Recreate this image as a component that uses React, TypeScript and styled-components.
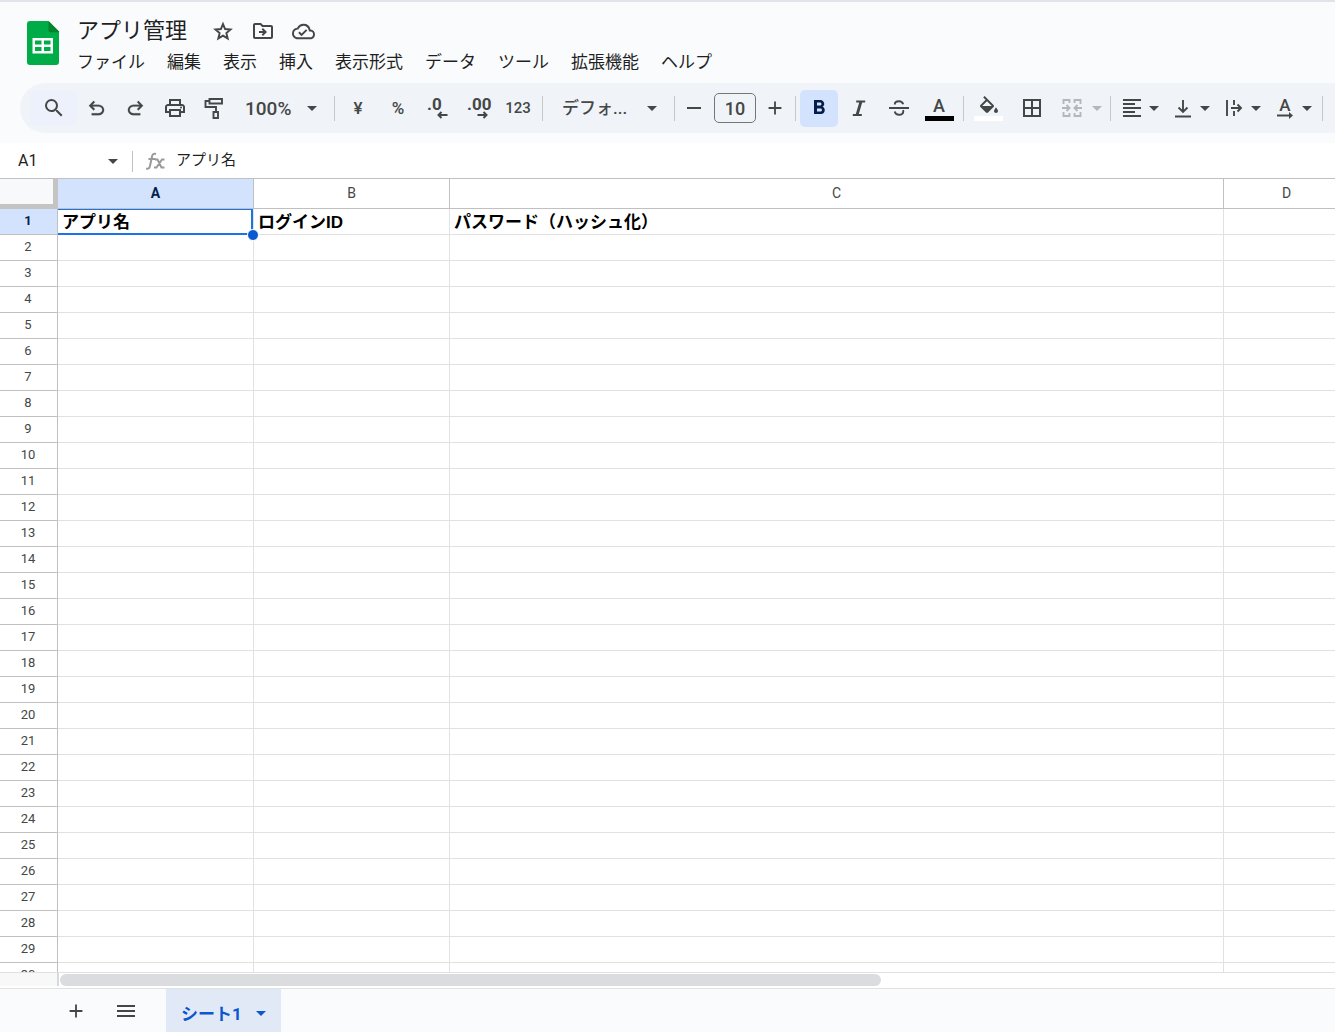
import React from "react";
import styled, { createGlobalStyle } from "styled-components";
import {
  MdAdd,
  MdArrowDropDown,
  MdBorderAll,
  MdFormatAlignLeft,
  MdFormatBold,
  MdMenu,
  MdOutlineCloudDone,
  MdOutlineDriveFileMove,
  MdOutlinePrint,
  MdRemove,
  MdSearch,
} from "react-icons/md";

const ui = `Roboto, "Noto Sans CJK JP", sans-serif`;
const ink = "#444746";
const line = "#c0c0c0";

const GlobalStyle = createGlobalStyle`
  *, *::before, *::after { box-sizing: border-box; }
  body { margin: 0; font-family: ${ui}; color: #1f1f1f; overflow: hidden; }
  button, input, select { font: inherit; color: inherit; border: 0; margin: 0; padding: 0; background: none; }
  button, select { cursor: pointer; }
  svg { display: block; flex: none; }
`;

const Page = styled.div`
  display: flex;
  flex-direction: column;
  height: 100vh;
  background: #fff;
`;

const Top = styled.header`
  flex: none;
  background: #f9fbfd;
  border-top: 2px solid #e1e3ea;
  padding-bottom: 10px;
`;

const Branding = styled.div`
  display: flex;
  height: 81px;
  padding-left: 26px;
  gap: 17px;
`;

const HomeLink = styled.a`
  padding-top: 19px;
`;

const Heading = styled.div`
  display: flex;
  flex-direction: column;
  padding-top: 13px;
`;

const TitleRow = styled.div`
  display: flex;
  align-items: center;
  height: 32px;
`;

const Title = styled.h1`
  margin: 0 16px 0 0;
  font-size: 22px;
  line-height: 32px;
  font-weight: 400;
`;

const TitleButton = styled.button`
  display: flex;
  justify-content: center;
  width: 40px;
  color: ${ink};
`;

const TitleActions = styled.div`
  display: flex;
  align-items: center;
`;

const MenuBar = styled.nav`
  display: flex;
  gap: 22px;
`;

const MenuButton = styled.button`
  font-size: 17px;
  line-height: 30px;
  white-space: nowrap;
`;

const Toolbar = styled.div`
  display: flex;
  align-items: center;
  height: 50px;
  margin-left: 20px;
  padding-left: 10px;
  border-radius: 25px 0 0 25px;
  background: #f0f4f9;
  color: ${ink};
  overflow: hidden;
  font-weight: 500;
`;

const Tool = styled.button<{ $width?: number; $active?: boolean; $tint?: boolean; $size?: number }>`
  display: flex;
  flex: none;
  align-items: center;
  justify-content: center;
  width: ${(p) => p.$width ?? 38}px;
  height: ${(p) => (p.$tint ? 35 : 37)}px;
  margin: 0 ${(p) => (p.$width ? 0 : 1)}px;
  border-radius: 5px;
  font-size: ${(p) => p.$size ?? 17}px;
  color: ${(p) => (p.$active ? "#041e49" : "inherit")};
  background: ${(p) => (p.$active ? "#d3e3fd" : p.$tint ? "#edf1fb" : "transparent")};
`;

const Split = styled.button<{ $wide?: boolean }>`
  display: flex;
  flex: none;
  align-items: center;
  width: ${(p) => (p.$wide ? 53 : 51)}px;
  height: 37px;
  gap: ${(p) => (p.$wide ? 3 : 0)}px;
  padding-left: ${(p) => (p.$wide ? 7 : 6)}px;

  &:disabled {
    color: #b4b7b9;
  }
`;

const Caret = styled(MdArrowDropDown)`
  width: 24px;
  height: 24px;
  margin: 0 -2px;
`;

const Divider = styled.span`
  flex: none;
  width: 1px;
  height: 25px;
  margin: 0 3px 0 4px;
  background: #c7c7c7;
`;

const Picker = styled.label<{ $width: number; $pad: number; $size: number }>`
  display: flex;
  flex: none;
  align-items: center;
  width: ${(p) => p.$width}px;
  padding: 0 8px 0 ${(p) => p.$pad}px;
  font-size: ${(p) => p.$size}px;

  select {
    flex: 1;
    min-width: 0;
    appearance: none;
    outline: 0;
  }
`;

const SizeInput = styled.input`
  flex: none;
  width: 42px;
  height: 30px;
  margin: 0 3px 0 4px;
  border: 1px solid #747775;
  border-radius: 5px;
  text-align: center;
  font-size: 18px;
`;

const Decimal = styled.span`
  display: grid;
  justify-items: start;
  width: 22px;
  font-size: 17px;
  line-height: 14px;
  font-weight: 700;

  svg {
    margin-left: 10px;
  }
`;

const Swatch = styled.span<{ $color: string }>`
  display: flex;
  flex-direction: column;
  align-items: center;
  justify-content: flex-end;
  width: 29px;
  height: 26px;
  font-size: 18px;
  line-height: 20px;
  border-bottom: 5px solid ${(p) => p.$color};
`;

const Rotated = styled.span`
  display: flex;
  flex-direction: column;
  align-items: center;
  width: 24px;
  font-size: 17px;
  line-height: 14px;
`;

const FormulaBar = styled.div`
  display: flex;
  flex: none;
  align-items: center;
  height: 35px;
`;

const NameBox = styled.input`
  width: 83px;
  margin-left: 18px;
  font-size: 16px;
`;

const NameCaret = styled.button`
  display: flex;
`;

const FormulaDivider = styled.span`
  width: 1px;
  height: 21px;
  margin: 2px 13px 0 7px;
  background: ${line};
`;

const FormulaInput = styled.input`
  flex: 1;
  min-width: 0;
  height: 26px;
  margin-left: 10px;
  padding-bottom: 4px;
  font-size: 15px;
`;

const Viewport = styled.main`
  flex: 1;
  min-height: 0;
  overflow: hidden;
  border-top: 1px solid ${line};
`;

const Grid = styled.table`
  table-layout: fixed;
  width: 1350px;
  min-width: 100%;
  border-spacing: 0;
`;

const Corner = styled.td`
  height: 30px;
  padding: 0;
  background: #f8f9fa;
  border: solid #c4c4c4;
  border-width: 0 5px 5px 0;
`;

const ColumnHead = styled.th<{ $selected: boolean }>`
  height: 30px;
  padding: 0 0 1px;
  border: solid ${line};
  border-width: 0 1px 1px 0;
  background: ${(p) => (p.$selected ? "#d3e3fd" : "#fff")};
  color: ${(p) => (p.$selected ? "#041e49" : ink)};
  font-size: 14px;
  font-weight: ${(p) => (p.$selected ? 700 : 400)};
`;

const RowHead = styled.th<{ $selected: boolean }>`
  height: 26px;
  padding: 0 1px 2px 0;
  border: solid ${line};
  border-width: 0 1px 1px 0;
  background: ${(p) => (p.$selected ? "#d3e3fd" : "#fff")};
  color: ${(p) => (p.$selected ? "#041e49" : ink)};
  font-size: 13px;
  line-height: 16px;
  font-weight: ${(p) => (p.$selected ? 700 : 400)};
`;

const Cell = styled.td`
  position: relative;
  height: 26px;
  padding: 3px 4px 0;
  border: solid #e1e1e1;
  border-width: 0 1px 1px 0;
  color: #000;
  font-family: "Liberation Sans", "Noto Sans CJK JP", sans-serif;
  font-size: 17px;
  line-height: 22px;
  font-weight: 700;
  white-space: nowrap;
`;

const Selection = styled.span`
  position: absolute;
  inset: 0 0 -1px 0;
  border: solid #1a73e8;
  border-width: 1px 2px 2px 0;

  &::after {
    content: "";
    position: absolute;
    right: -8px;
    bottom: -8px;
    width: 12px;
    height: 12px;
    border: 1px solid #fff;
    border-radius: 50%;
    background: #0b57d0;
    z-index: 1;
  }
`;

const ScrollArea = styled.div`
  display: flex;
  flex: none;
  height: 16px;
  border-top: 1px solid #e1e1e1;
`;

const ScrollCorner = styled.div`
  width: 59px;
  height: 13px;
  background: #f8f8f8;
  border-right: 2px solid #d9d9d9;
`;

const ScrollTrack = styled.div`
  flex: 1;
  padding: 1px 0 0 1px;
`;

const ScrollThumb = styled.div`
  width: 64.4%;
  height: 12px;
  border-radius: 6px;
  background: #dadce0;
`;

const SheetBar = styled.footer`
  display: flex;
  flex: none;
  height: 44px;
  padding-left: 51px;
  border-top: 1px solid #e1e1e1;
  background: #f9fbfd;
  color: ${ink};
`;

const SheetTool = styled.button`
  display: flex;
  align-items: center;
  justify-content: center;
  width: 50px;
`;

const SheetTab = styled.button`
  display: flex;
  align-items: center;
  width: 115px;
  margin-left: 15px;
  padding: 4px 10px 0 15px;
  justify-content: space-between;
  background: #e1e9f7;
  color: #0b57d0;
  font-size: 17px;
  font-weight: 700;
  white-space: nowrap;
`;

const SheetsLogo = () => (
  <svg width="34" height="45" viewBox="0 0 34 45">
    <path d="M4 0h18.500L33 10.500V41a3 3 0 0 1-3 3H4a3 3 0 0 1-3-3V3a3 3 0 0 1 3-3z" fill="#00ac47" />
    <path d="M22.500 0 33 10.500v.8H24.500a2 2 0 0 1-2-2z" fill="#00832d" />
    <path
      d="M6.500 17h20.500v15.500H6.500zM9 19.500v4h6.500v-4zM18 19.500v4h6.500v-4zM9 26v4h6.500v-4zM18 26v4h6.500v-4z"
      fill="#fff"
      fillRule="evenodd"
    />
  </svg>
);

const StarIcon = () => (
  <svg width="22" height="22" viewBox="0 0 24 24" fill="none" stroke="currentColor" strokeWidth="2.100">
    <path d="M12 4.400l2.300 5.500 5.900.5-4.500 3.900 1.400 5.800L12 17l-5.100 3.100 1.400-5.800-4.500-3.900 5.900-.5z" />
  </svg>
);

const UndoIcon = ({ flip }: { flip?: boolean }) => (
  <svg width="23" height="23" viewBox="0 -960 960 960" fill="currentColor" stroke="currentColor" strokeWidth="8">
    <path
      transform={flip ? "translate(960 0) scale(-1 1)" : undefined}
      d="M280-200v-80h284q63 0 109.500-40T720-420q0-60-46.500-100T564-560H312l104 104-56 56-200-200 200-200 56 56-104 104h252q97 0 166.500 63T800-420q0 94-69.500 157T564-200H280Z"
    />
  </svg>
);

const PaintIcon = () => (
  <svg width="24" height="24" viewBox="0 0 24 24" fill="none" stroke="currentColor" strokeWidth="1.900">
    <path d="M7.500 3h12.500v4.500H7.500zM7.500 5H3.500v6h10.500v5M11.500 16h4.500v6h-4.500z" />
  </svg>
);

const ItalicIcon = () => (
  <svg width="24" height="24" viewBox="0 0 24 24" fill="none" stroke="currentColor">
    <path d="M9.200 5.500h9M5.800 19h9" strokeWidth="2.200" />
    <path d="M14 5.500 10 19" strokeWidth="2.800" />
  </svg>
);

const StrikeIcon = () => (
  <svg width="24" height="24" viewBox="0 0 24 24" fill="none" stroke="currentColor" strokeWidth="1.900">
    <path d="M2 12h20" />
    <path d="M16.200 8.200C15.500 6.200 14 5.200 12 5.200c-2.500 0-4.200 1.300-4.200 3.200" />
    <path d="M7.700 15.500c.6 2.200 2.300 3.300 4.300 3.300 2.600 0 4.300-1.300 4.300-3.500 0-.4-.1-.8-.3-1.200" />
  </svg>
);

const FillIcon = () => (
  <svg width="24" height="20" viewBox="0 0 24 20" fill="currentColor">
    <path d="M16.560 8.940 7.620 0 6.210 1.410l2.380 2.380-5.150 5.150c-.59.59-.59 1.540 0 2.120l5.500 5.500c.29.29.68.44 1.060.44s.77-.15 1.060-.44l5.500-5.500c.59-.58.59-1.530 0-2.120zM5.210 10 10 5.210 14.790 10zM19 11.500s-2 2.170-2 3.500c0 1.100.9 2 2 2s2-.9 2-2c0-1.330-2-3.500-2-3.500z" />
  </svg>
);

const MergeIcon = () => (
  <svg width="24" height="24" viewBox="0 0 24 24" fill="none" stroke="currentColor" strokeWidth="1.900">
    <path d="M9.500 7V4H3.500v4M14.500 7V4h6v4M9.500 17v3H3.500v-4M14.500 17v3h6v-4M2 12h7M22 12h-7M6.500 9l3 3-3 3M17.500 9l-3 3 3 3" />
  </svg>
);

const BottomIcon = () => (
  <svg width="24" height="24" viewBox="0 0 24 24" fill="none" stroke="currentColor" strokeWidth="1.900">
    <path d="M12 4v12M7.500 11.500 12 16l4.500-4.500M4 20.500h16" />
  </svg>
);

const OverflowIcon = () => (
  <svg width="24" height="24" viewBox="0 0 24 24" fill="none" stroke="currentColor" strokeWidth="1.900">
    <path d="M5 4v16M12 4v5M12 15v5M9 12h10M15.500 8.500 19 12l-3.500 3.500" />
  </svg>
);

const ArrowMark = ({ left }: { left?: boolean }) => (
  <svg width="11" height="8" viewBox="0 0 11 8" fill="none" stroke="currentColor" strokeWidth="2">
    <path d={left ? "M10.500 4H1.500M4.500 1 1.500 4l3 3" : "M.5 4h9M6.500 1l3 3-3 3"} />
  </svg>
);

const RotateMark = () => (
  <svg width="18" height="7" viewBox="0 0 18 7" fill="currentColor">
    <path d="M1 2.600h12V0l4 3.500L13 7V4.500H1z" />
  </svg>
);

const FunctionIcon = () => (
  <svg width="20" height="22" viewBox="0 0 20 22" fill="none" stroke="#989a9c" strokeWidth="2">
    <path d="M0 18.500c2.500 1 3.600-.5 4.100-3L6 6.500C6.500 4 7.700 3.200 10 4M2.500 9h7" />
    <path d="M9 9.500h2.500l4 8h3M18.500 9.500H16L10.500 17.500H8" />
  </svg>
);

const menus = ["ファイル", "編集", "表示", "挿入", "表示形式", "データ", "ツール", "拡張機能", "ヘルプ"];

const columns = [
  { name: "A", width: 196 },
  { name: "B", width: 196 },
  { name: "C", width: 774 },
  { name: "D", width: undefined },
];

const headings = ["アプリ名", "ログインID", "パスワード（ハッシュ化）", ""];

const rows = Array.from({ length: 30 }, (_, i) => i + 1);

export default function App() {
  return (
    <Page>
      <GlobalStyle />
      <Top>
        <Branding>
          <HomeLink href="#" aria-label="スプレッドシート ホーム">
            <SheetsLogo />
          </HomeLink>
          <Heading>
            <TitleRow>
              <Title>アプリ管理</Title>
              <TitleActions>
                <TitleButton aria-label="スター"><StarIcon /></TitleButton>
                <TitleButton aria-label="移動"><MdOutlineDriveFileMove size={24} /></TitleButton>
                <TitleButton aria-label="保存状況"><MdOutlineCloudDone size={23} /></TitleButton>
              </TitleActions>
            </TitleRow>
            <MenuBar>
              {menus.map((m) => (
                <MenuButton key={m}>{m}</MenuButton>
              ))}
            </MenuBar>
          </Heading>
        </Branding>

        <Toolbar role="toolbar">
          <Tool $width={47} $tint aria-label="検索"><MdSearch size={24} /></Tool>
          <Tool $width={39} aria-label="元に戻す"><UndoIcon /></Tool>
          <Tool $width={39} aria-label="やり直し"><UndoIcon flip /></Tool>
          <Tool $width={39} aria-label="印刷"><MdOutlinePrint size={24} /></Tool>
          <Tool $width={39} aria-label="書式を貼り付け"><PaintIcon /></Tool>
          <Picker $width={97} $pad={12} $size={19}>
            <select aria-label="ズーム" defaultValue="100%">
              <option>100%</option>
            </select>
            <Caret />
          </Picker>
          <Divider />
          <Tool aria-label="通貨">¥</Tool>
          <Tool aria-label="パーセント">%</Tool>
          <Tool aria-label="小数点以下の桁数を減らす">
            <Decimal>.0<ArrowMark left /></Decimal>
          </Tool>
          <Tool aria-label="小数点以下の桁数を増やす">
            <Decimal>.00<ArrowMark /></Decimal>
          </Tool>
          <Tool $size={15} aria-label="表示形式の詳細設定">123</Tool>
          <Divider />
          <Picker $width={124} $pad={16} $size={17}>
            <select aria-label="フォント" defaultValue="デフォ...">
              <option>デフォ...</option>
            </select>
            <Caret />
          </Picker>
          <Divider />
          <Tool $width={32} aria-label="フォントサイズを縮小"><MdRemove size={24} /></Tool>
          <SizeInput aria-label="フォントサイズ" defaultValue="10" />
          <Tool $width={32} aria-label="フォントサイズを拡大"><MdAdd size={22} /></Tool>
          <Divider />
          <Tool $active aria-label="太字"><MdFormatBold size={24} /></Tool>
          <Tool aria-label="斜体"><ItalicIcon /></Tool>
          <Tool aria-label="取り消し線"><StrikeIcon /></Tool>
          <Tool aria-label="テキストの色"><Swatch $color="#000">A</Swatch></Tool>
          <Divider />
          <Tool $width={43} aria-label="塗りつぶしの色">
            <Swatch $color="#fff"><FillIcon /></Swatch>
          </Tool>
          <Tool $width={43} aria-label="枠線"><MdBorderAll size={24} /></Tool>
          <Split $wide disabled aria-label="セルを結合"><MergeIcon /><Caret /></Split>
          <Divider />
          <Split aria-label="水平方向の配置"><MdFormatAlignLeft size={24} /><Caret /></Split>
          <Split aria-label="垂直方向の配置"><BottomIcon /><Caret /></Split>
          <Split aria-label="テキストの折り返し"><OverflowIcon /><Caret /></Split>
          <Split aria-label="テキストの回転">
            <Rotated>A<RotateMark /></Rotated>
            <Caret />
          </Split>
          <Divider />
        </Toolbar>
      </Top>

      <FormulaBar>
        <NameBox aria-label="名前ボックス" defaultValue="A1" />
        <NameCaret aria-label="名前付き範囲"><MdArrowDropDown size={24} color={ink} /></NameCaret>
        <FormulaDivider />
        <FunctionIcon />
        <FormulaInput aria-label="数式バー" defaultValue="アプリ名" />
      </FormulaBar>

      <Viewport>
        <Grid>
          <colgroup>
            <col width={58} />
            {columns.map((c) => (
              <col key={c.name} width={c.width} />
            ))}
          </colgroup>
          <thead>
            <tr>
              <Corner />
              {columns.map((c) => (
                <ColumnHead key={c.name} scope="col" $selected={c.name === "A"}>{c.name}</ColumnHead>
              ))}
            </tr>
          </thead>
          <tbody>
            {rows.map((r) => (
              <tr key={r}>
                <RowHead scope="row" $selected={r === 1}>{r}</RowHead>
                {columns.map((c, i) => (
                  <Cell key={c.name}>
                    {r === 1 ? headings[i] : null}
                    {r === 1 && i === 0 && <Selection />}
                  </Cell>
                ))}
              </tr>
            ))}
          </tbody>
        </Grid>
      </Viewport>

      <ScrollArea>
        <ScrollCorner />
        <ScrollTrack>
          <ScrollThumb />
        </ScrollTrack>
      </ScrollArea>

      <SheetBar>
        <SheetTool aria-label="シートを追加"><MdAdd size={22} /></SheetTool>
        <SheetTool aria-label="すべてのシート"><MdMenu size={24} /></SheetTool>
        <SheetTab>シート1<Caret /></SheetTab>
      </SheetBar>
    </Page>
  );
}
